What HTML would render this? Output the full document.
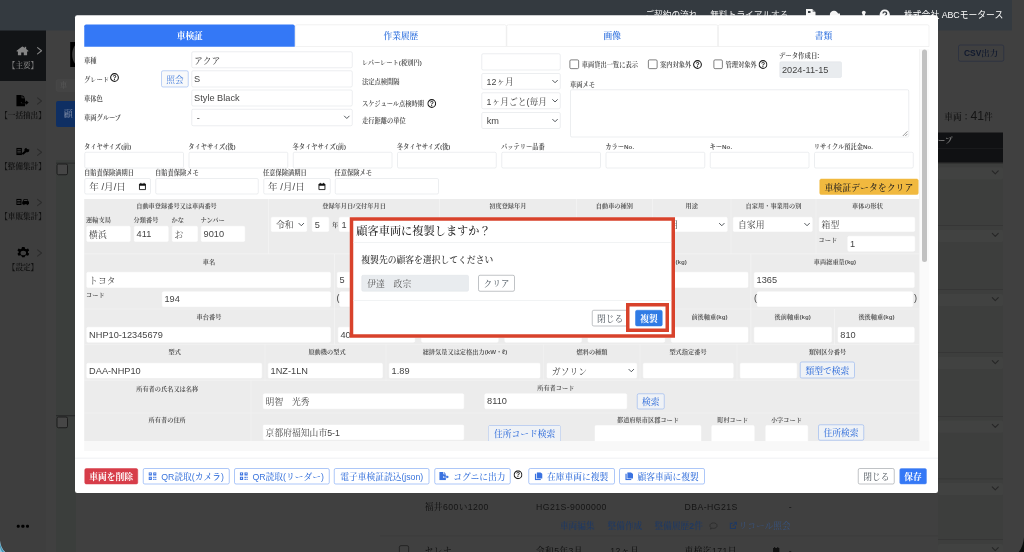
<!DOCTYPE html>
<html lang="ja"><head><meta charset="utf-8"><title>車両管理</title>
<style>
html,body{margin:0;padding:0;background:#404040;}
body{width:1024px;height:552px;overflow:hidden;font-family:"Liberation Sans","Noto Serif CJK JP","Noto Serif CJK SC",serif;}
#wrap{position:absolute;left:0;top:0;width:4096px;height:2208px;transform:scale(.25);transform-origin:0 0;filter:contrast(1);}
#root{position:relative;width:4096px;height:2208px;overflow:hidden;background:#404040;}
#root div,#root svg.abs{position:absolute;box-sizing:border-box;}
.lb{font-weight:bold;color:#5a5a5a;white-space:nowrap;}
.nv{font-family:"Liberation Sans","Noto Sans CJK JP",sans-serif;}
.in{background:#fff;border:2.2px solid #d9dce0;border-radius:6.4px;color:#444;font-size:36.8px;display:flex;align-items:center;padding-left:8.4px;white-space:nowrap;overflow:hidden;}
.in.g{border-color:#fff;}
.in.dis{background:#e9ecef;border-color:#dfe3e7;}
.sel .chev{position:absolute;right:5.2px;top:50%;width:30.4px;height:30.4px;margin-top:-15.2px;}
.bt{border-radius:7.2px;font-size:35px;font-weight:500;display:flex;align-items:center;justify-content:center;white-space:nowrap;border:2px solid #5a8ff0;color:#3a74dc;background:#fff;}
.bt span{display:flex;align-items:center;}
.bt span{position:relative;}
.cb{border:3.2px solid #555;border-radius:6.4px;background:#fff;}
.bgt{color:#141414;white-space:nowrap;letter-spacing:1.68px;font-weight:500;}
.lnk{color:#203961;white-space:nowrap;font-weight:600;}
.in.date{padding-left:6px;font-size:38.4px;}
.cal{position:absolute;right:14.8px;top:50%;width:33.6px;height:33.6px;margin-top:-16.4px;}
.ic{flex:none;}
</style></head><body><div id="wrap"><div id="root">

<div style="left:0px;top:120px;width:184px;height:2088px;background:#3e3e3e;"></div>
<div style="left:224px;top:640px;width:80px;height:1568px;background:#3b3e3c;"></div>
<div style="left:0px;top:120px;width:184px;height:204px;background:#121416;"></div>
<div class="lb" style="left:217.6px;top:184px;height:56px;line-height:56px;font-size:100px;color:#000;font-weight:bold;height:120px;line-height:120px;top:160.4px;">【</div>
<div style="left:224px;top:318px;width:96px;height:48px;border:2.4px solid #4d4d4d;border-radius:8px;background:#444;"></div>
<div class="lb" style="left:239.2px;top:314px;height:56px;line-height:56px;font-size:30px;color:#585858;font-weight:normal;">車</div>
<div style="left:224px;top:404px;width:136px;height:104px;background:#0f2f63;border-radius:8px;"></div>
<div class="lb" style="left:255.2px;top:428px;height:56px;line-height:56px;font-size:36px;color:#8691aa;font-weight:normal;">顧</div>
<div style="left:226.4px;top:654.4px;width:45.6px;height:46.8px;border:4.4px solid #1d1d1d;border-radius:8px;background:#464646;"></div>
<div style="left:226.4px;top:1666.4px;width:45.6px;height:46.4px;border:4.4px solid #1d1d1d;border-radius:8px;background:#464646;"></div>
<div style="left:224px;top:650.8px;width:80px;height:3.6px;background:#262626;"></div>
<div style="left:224px;top:1661.2px;width:80px;height:3.6px;background:#262626;"></div>
<svg class="abs" preserveAspectRatio="none" style="left:65.2px;top:184.8px;width:50px;height:36.8px" viewBox="1.2 1.500 13.600 11"><path d="M8 1.500L1.200 7.200l.9 1 .9-.8V12.500h3.600V9h2.800v3.500H13V7.400l.9.800.9-1L12 4.800V2.200h-1.600v1.300z" fill="#858585"/></svg>
<svg class="abs" style="left:143.2px;top:183.2px;width:32px;height:40px" viewBox="0 0 8 10"><path d="M1.8 1.900l4 3.100-4 3.100" fill="none" stroke="#858585" stroke-width="1.15" stroke-linecap="round" stroke-linejoin="round"/></svg>
<div class="lb" style="left:-28px;width:240px;text-align:center;top:230.8px;height:56px;line-height:56px;font-size:30.4px;color:#7d7d7d;font-weight:600;">【主要】</div>
<svg class="abs" preserveAspectRatio="none" style="left:65.2px;top:380.4px;width:50px;height:45.6px" viewBox="2.500 1 12.100 12"><path d="M2.500 1h5.200v3.300H11V8.300H7v1.400h4V13H2.500z M8.400 1l2.600 2.600H8.400z" fill="#000"/><path d="M11.700 6.600l3 2.400-3 2.400V9.900H7.600V8.100h4.100z" fill="#000"/></svg>
<svg class="abs" style="left:143.2px;top:384.4px;width:32px;height:40px" viewBox="0 0 8 10"><path d="M1.8 1.900l4 3.100-4 3.100" fill="none" stroke="#2c2c2c" stroke-width="1.15" stroke-linecap="round" stroke-linejoin="round"/></svg>
<div class="lb" style="left:-28px;width:240px;text-align:center;top:433.6px;height:56px;line-height:56px;font-size:30.4px;color:#101010;font-weight:600;">【一括抽出】</div>
<svg class="abs" preserveAspectRatio="none" style="left:65.2px;top:591.2px;width:52px;height:29.6px" viewBox="2 2.600 12 8.400"><path d="M2 2.600h5.200v8.400H2z M3 4.300h3.200v.9H3z M3 6.100h3.200v.9H3z M3 7.900h3.200v.9H3z" fill="#000" fill-rule="evenodd"/><path d="M8.300 9.300L11.900 5.200" stroke="#000" stroke-width="2.100" stroke-linecap="round" fill="none"/><path d="M14 3.600a2.500 2.500 0 1 1-2.200-1l-.3 1.700 1.300.6z" fill="#000"/></svg>
<svg class="abs" style="left:143.2px;top:589.2px;width:32px;height:40px" viewBox="0 0 8 10"><path d="M1.8 1.900l4 3.100-4 3.100" fill="none" stroke="#2c2c2c" stroke-width="1.15" stroke-linecap="round" stroke-linejoin="round"/></svg>
<div class="lb" style="left:-28px;width:240px;text-align:center;top:636px;height:56px;line-height:56px;font-size:30.4px;color:#101010;font-weight:600;">【整備集計】</div>
<svg class="abs" preserveAspectRatio="none" style="left:65.2px;top:795.2px;width:52px;height:25.6px" viewBox="1.500 3.500 13.700 7.200"><path d="M1.500 3.500h5.500v7H1.500z M2.500 5h3.500v.9H2.500z M2.500 6.800h3.500v.9H2.500z M2.500 8.500h3.500v.9H2.500z" fill="#000" fill-rule="evenodd"/><path d="M8.600 6.200l.8-2.400h4l.8 2.400c.5.100.8.500.8 1v2.600h-1.200v.9h-1.100v-.9h-2.600v.9H9v-.9H7.800V7.200c0-.5.300-.9.800-1z M9.500 6h4l-.5-1.400h-3z" fill="#000" fill-rule="evenodd"/></svg>
<svg class="abs" style="left:143.2px;top:789.6px;width:32px;height:40px" viewBox="0 0 8 10"><path d="M1.8 1.900l4 3.100-4 3.100" fill="none" stroke="#2c2c2c" stroke-width="1.15" stroke-linecap="round" stroke-linejoin="round"/></svg>
<div class="lb" style="left:-28px;width:240px;text-align:center;top:838.4px;height:56px;line-height:56px;font-size:30.4px;color:#101010;font-weight:600;">【車販集計】</div>
<svg class="abs" preserveAspectRatio="none" style="left:68.8px;top:988px;width:48.4px;height:48px" viewBox="2.100 1 11.800 14"><path d="M8 5.300a2.700 2.700 0 1 0 0 5.400 2.700 2.700 0 0 0 0-5.400z M6.700 1h2.600l.4 1.900 1.100.6 1.800-.7 1.300 2.200-1.400 1.300v1.400l1.400 1.300-1.300 2.200-1.800-.7-1.100.6-.4 1.900H6.700l-.4-1.900-1.100-.6-1.800.7-1.300-2.200 1.400-1.300V6.300L2.100 5l1.300-2.200 1.800.7 1.100-.6z" fill="#000" fill-rule="evenodd"/></svg>
<svg class="abs" style="left:143.2px;top:992px;width:32px;height:40px" viewBox="0 0 8 10"><path d="M1.8 1.900l4 3.100-4 3.100" fill="none" stroke="#2c2c2c" stroke-width="1.15" stroke-linecap="round" stroke-linejoin="round"/></svg>
<div class="lb" style="left:-28px;width:240px;text-align:center;top:1042.4px;height:56px;line-height:56px;font-size:30.4px;color:#101010;font-weight:600;">【設定】</div>
<div style="left:66.8px;top:2098.8px;width:12.4px;height:12.4px;background:#000;border-radius:4.8px;"></div>
<div style="left:85.2px;top:2098.8px;width:12.4px;height:12.4px;background:#000;border-radius:4.8px;"></div>
<div style="left:103.6px;top:2098.8px;width:12.4px;height:12.4px;background:#000;border-radius:4.8px;"></div>
<div style="left:3833.2px;top:178.8px;width:182.8px;height:66.8px;border:2.8px solid #1c2740;border-radius:8px;"></div>
<div class="lb" style="left:3824px;width:200px;text-align:center;top:184px;height:56px;line-height:56px;font-size:33.6px;color:#10192e;font-weight:600;">CSV出力</div>
<div class="lb" style="left:3777.2px;top:436px;height:56px;line-height:56px;font-size:34.8px;color:#141414;font-weight:600;height:72px;line-height:72px;top:426px;">車両：<span style="font-size:48.8px;font-weight:normal;">41</span>件</div>
<div style="left:3752px;top:529.6px;width:260px;height:124.8px;background:#101113;"></div>
<div style="left:3752px;top:592px;width:260px;height:2.4px;background:#232527;"></div>
<div class="lb" style="left:3751.2px;top:534px;height:56px;line-height:56px;font-size:30.4px;color:#707070;">ープ</div>
<div style="left:3752px;top:654.4px;width:260px;height:1553.6px;background:#3d3e3d;"></div>
<div style="left:3752px;top:650.4px;width:260px;height:2.8px;background:#343434;"></div>
<div style="left:3752px;top:668.8px;width:260px;height:48.8px;background:#414241;border-radius:6px;"></div>
<svg class="abs" style="left:3965.2px;top:679.2px;width:32px;height:24px" viewBox="0 0 8 6"><path d="M1 1.2l3 3 3-3" fill="none" stroke="#272727" stroke-width="1.1" stroke-linecap="round" stroke-linejoin="round"/></svg>
<div style="left:3752px;top:900.4px;width:260px;height:2.8px;background:#343434;"></div>
<div style="left:3752px;top:918.8px;width:260px;height:48.8px;background:#414241;border-radius:6px;"></div>
<svg class="abs" style="left:3965.2px;top:929.2px;width:32px;height:24px" viewBox="0 0 8 6"><path d="M1 1.2l3 3 3-3" fill="none" stroke="#272727" stroke-width="1.1" stroke-linecap="round" stroke-linejoin="round"/></svg>
<div style="left:3752px;top:1157.2px;width:260px;height:2.8px;background:#343434;"></div>
<div style="left:3752px;top:1175.6px;width:260px;height:48.8px;background:#414241;border-radius:6px;"></div>
<svg class="abs" style="left:3965.2px;top:1186px;width:32px;height:24px" viewBox="0 0 8 6"><path d="M1 1.2l3 3 3-3" fill="none" stroke="#272727" stroke-width="1.1" stroke-linecap="round" stroke-linejoin="round"/></svg>
<div style="left:3752px;top:1408.8px;width:260px;height:2.8px;background:#343434;"></div>
<div style="left:3752px;top:1427.2px;width:260px;height:48.8px;background:#414241;border-radius:6px;"></div>
<svg class="abs" style="left:3965.2px;top:1437.6px;width:32px;height:24px" viewBox="0 0 8 6"><path d="M1 1.2l3 3 3-3" fill="none" stroke="#272727" stroke-width="1.1" stroke-linecap="round" stroke-linejoin="round"/></svg>
<div style="left:3752px;top:1664px;width:260px;height:2.8px;background:#343434;"></div>
<div style="left:3752px;top:1682.4px;width:260px;height:48.8px;background:#414241;border-radius:6px;"></div>
<svg class="abs" style="left:3965.2px;top:1692.8px;width:32px;height:24px" viewBox="0 0 8 6"><path d="M1 1.2l3 3 3-3" fill="none" stroke="#272727" stroke-width="1.1" stroke-linecap="round" stroke-linejoin="round"/></svg>
<div style="left:3752px;top:1914px;width:260px;height:2.8px;background:#343434;"></div>
<div style="left:3752px;top:1932.4px;width:260px;height:48.8px;background:#414241;border-radius:6px;"></div>
<svg class="abs" style="left:3965.2px;top:1942.8px;width:32px;height:24px" viewBox="0 0 8 6"><path d="M1 1.2l3 3 3-3" fill="none" stroke="#272727" stroke-width="1.1" stroke-linecap="round" stroke-linejoin="round"/></svg>
<div style="left:3752px;top:2157.2px;width:260px;height:2.8px;background:#343434;"></div>
<div style="left:3752px;top:2175.6px;width:260px;height:48.8px;background:#414241;border-radius:6px;"></div>
<svg class="abs" style="left:3965.2px;top:2186px;width:32px;height:24px" viewBox="0 0 8 6"><path d="M1 1.2l3 3 3-3" fill="none" stroke="#272727" stroke-width="1.1" stroke-linecap="round" stroke-linejoin="round"/></svg>
<div class="bgt" style="left:1698.8px;top:1998.4px;height:56px;line-height:56px;font-size:34.8px;">福井600い1200</div>
<div class="bgt" style="left:2144px;top:1998.4px;height:56px;line-height:56px;font-size:34.8px;">HG21S-9000000</div>
<div class="bgt" style="left:2738.4px;top:1998.4px;height:56px;line-height:56px;font-size:34.8px;">DBA-HG21S</div>
<div class="bgt" style="left:3155.2px;top:1998.4px;height:56px;line-height:56px;font-size:34.8px;">-</div>
<div class="lnk" style="left:2239.6px;top:2074.8px;height:56px;line-height:56px;font-size:34.8px;">車両編集</div>
<div class="lnk" style="left:2430px;top:2074.8px;height:56px;line-height:56px;font-size:34.8px;">整備作成</div>
<div class="lnk" style="left:2618px;top:2074.8px;height:56px;line-height:56px;font-size:34.8px;">整備履歴2件</div>
<svg class="abs" style="left:2836px;top:2086px;width:36px;height:36px" viewBox="0 0 16 16"><path d="M8 2.5c3.600 0 6.300 2.100 6.300 4.900S11.600 12.300 8 12.300c-.8 0-1.600-.1-2.300-.3L2.500 13.500l1-2.600C2.400 10 1.700 8.800 1.700 7.400 1.700 4.600 4.400 2.500 8 2.500z" fill="none" stroke="#2a2a2a" stroke-width="1.3"/></svg>
<svg class="abs" style="left:2916px;top:2084.8px;width:34px;height:34px" viewBox="0 0 16 16"><path d="M12 9v4.500H2.500V4H7" fill="none" stroke="#203961" stroke-width="2"/><path d="M9 2h5v5M14 2L7 9" fill="none" stroke="#203961" stroke-width="2"/></svg>
<div class="lnk" style="left:2955.2px;top:2074.8px;height:56px;line-height:56px;font-size:34.8px;font-weight:normal;color:#38537f;">リコール照会</div>
<div style="left:1520px;top:2142.4px;width:2232px;height:2.4px;background:#3b3b3b;"></div>
<div style="left:1596px;top:2180.8px;width:40px;height:47.2px;border:3.6px solid #1c1c1c;border-radius:8px;"></div>
<div class="bgt" style="left:1698.8px;top:2174.4px;height:56px;line-height:56px;font-size:34.8px;">セレナ</div>
<div class="bgt" style="left:2144px;top:2174.4px;height:56px;line-height:56px;font-size:34.8px;">令和5年3月</div>
<div class="bgt" style="left:2441.2px;top:2174.4px;height:56px;line-height:56px;font-size:34.8px;">12ヶ月</div>
<div class="bgt" style="left:2738.4px;top:2174.4px;height:56px;line-height:56px;font-size:34.8px;">車検迄171日</div>
<svg class="abs" style="left:3090px;top:2185.6px;width:29.6px;height:33.6px" viewBox="0 0 14 16"><path d="M1 3h12v12H1z M1 6.500h12" fill="#111" /><path d="M4 1v3M10 1v3" stroke="#111" stroke-width="2"/></svg>
<div class="bgt" style="left:3155.2px;top:2174.4px;height:56px;line-height:56px;font-size:34.8px;">-</div>
<div style="left:0px;top:0px;width:4048px;height:121.6px;background:#343a40;"></div>
<div class="lb nv" style="left:2581.2px;top:30.4px;height:56px;line-height:56px;font-size:34.8px;color:#f2f2f2;font-weight:normal;">ご契約の流れ</div>
<div class="lb nv" style="left:2841.2px;top:30.4px;height:56px;line-height:56px;font-size:34.8px;color:#f2f2f2;font-weight:normal;">無料トライアルする</div>
<svg class="abs" style="left:3220px;top:32px;width:48px;height:48px" viewBox="805 8 12 12"><path d="M806 8.900h6.300l3.200 3.200V20H806z" fill="#f4f4f4"/><path d="M808 11h2.500v2H808z" fill="#343a40"/><path d="M812.600 8.900v3h3z" fill="#343a40" opacity=".55"/></svg>
<svg class="abs" style="left:3316px;top:40px;width:48px;height:40px" viewBox="829 10 12 10"><circle cx="834" cy="15" r="4.200" fill="#f4f4f4"/><path d="M834 13.500h6v3h-6z" fill="#f4f4f4"/></svg>
<svg class="abs" style="left:3444px;top:40px;width:24px;height:40px" viewBox="861 10 6 10"><circle cx="863.800" cy="12.600" r="1.900" fill="#f4f4f4"/><path d="M862.600 13h2.400v7h-2.400z" fill="#f4f4f4"/></svg>
<svg class="abs" style="left:3516px;top:36px;width:48px;height:48px" viewBox="879 9 12 12"><circle cx="884.750" cy="14.600" r="5.100" fill="#f4f4f4"/><path d="M883 13.600a1.800 1.800 0 0 1 3.600 0c0 1.200-1.800 1.400-1.800 2.800" fill="none" stroke="#343a40" stroke-width="1.300"/></svg>
<div class="lb nv" style="left:3616px;top:30.4px;height:56px;line-height:56px;font-size:35.2px;color:#fff;font-weight:normal;">株式会社 ABCモータース</div>
<div style="left:300px;top:61.2px;width:3452px;height:1910.8px;background:#fff;border-radius:8.8px;"></div>
<div style="left:337.2px;top:98.4px;width:842px;height:88.4px;background:#3478f6;border-radius:7.2px 7.2px 0 0;"></div>
<div class="lb" style="left:359px;width:800px;text-align:center;top:114.4px;height:56px;line-height:56px;font-size:34.8px;color:#fff;">車検証</div>
<div style="left:1180.8px;top:98.4px;width:845.6px;height:88.4px;border:2.4px solid #e4e4e4;border-radius:7.2px 7.2px 0 0;"></div>
<div class="lb" style="left:1203.6px;width:800px;text-align:center;top:114.4px;height:56px;line-height:56px;font-size:34.8px;color:#3a78e0;font-weight:600;">作業履歴</div>
<div style="left:2026.4px;top:98.4px;width:845.2px;height:88.4px;border:2.4px solid #e4e4e4;border-radius:7.2px 7.2px 0 0;"></div>
<div class="lb" style="left:2049px;width:800px;text-align:center;top:114.4px;height:56px;line-height:56px;font-size:34.8px;color:#3a78e0;font-weight:600;">画像</div>
<div style="left:2871.6px;top:98.4px;width:845.2px;height:88.4px;border:2.4px solid #e4e4e4;border-radius:7.2px 7.2px 0 0;"></div>
<div class="lb" style="left:2894.2px;width:800px;text-align:center;top:114.4px;height:56px;line-height:56px;font-size:34.8px;color:#3a78e0;font-weight:600;">書類</div>
<div style="left:3677.2px;top:196.8px;width:39.6px;height:1607.2px;background:#fafafa;border-left:2px solid #ececec;"></div>
<div style="left:3688px;top:197.6px;width:20px;height:850.4px;background:#c1c1c1;border-radius:10px;"></div>
<div class="lb" style="left:336.4px;top:213.6px;height:56px;line-height:56px;font-size:25px;">車種</div>
<div class="lb" style="left:336.4px;top:288.8px;height:56px;line-height:56px;font-size:25px;">グレード</div>
<svg class="abs" style="left:439.6px;top:292.4px;width:36px;height:36px" viewBox="0 0 16 16"><circle cx="8" cy="8" r="6.9" fill="none" stroke="#1a1a1a" stroke-width="1.9"/><text x="8" y="12.3" text-anchor="middle" font-family="Liberation Sans, sans-serif" font-weight="bold" font-size="12" fill="#1a1a1a">?</text></svg>
<div class="lb" style="left:336.4px;top:365.6px;height:56px;line-height:56px;font-size:25px;">車体色</div>
<div class="lb" style="left:336.4px;top:443.2px;height:56px;line-height:56px;font-size:25px;">車両グループ</div>
<div class="bt" style="left:645.2px;top:282.4px;width:109.2px;height:66.4px;font-size:35px;background:#f8f9fa;border:2px solid #7fa6ee;color:#4a80dd;font-weight:normal;"><span>照会</span></div>
<div class="in" style="left:766px;top:206px;width:643.6px;height:66.4px;font-size:35.2px;"><span>アクア</span></div>
<div class="in" style="left:766px;top:282.4px;width:643.6px;height:66.4px;"><span>S</span></div>
<div class="in" style="left:766px;top:358.8px;width:643.6px;height:66.4px;"><span>Style Black</span></div>
<div class="in sel" style="left:766px;top:435.6px;width:643.6px;height:68px;"><span>&nbsp;-</span><svg class="chev" viewBox="0 0 16 16"><path d="M3 5.5l5 5 5-5" fill="none" stroke="#343a40" stroke-width="1.8" stroke-linecap="round" stroke-linejoin="round"/></svg></div>
<div class="lb" style="left:1447.6px;top:221.6px;height:56px;line-height:56px;font-size:25px;">レバーレート(税別円)</div>
<div class="lb" style="left:1447.6px;top:298.4px;height:56px;line-height:56px;font-size:25px;">法定点検間隔</div>
<div class="lb" style="left:1447.6px;top:385.6px;height:56px;line-height:56px;font-size:25px;">スケジュール点検時期</div>
<svg class="abs" style="left:1708.8px;top:395.6px;width:36px;height:36px" viewBox="0 0 16 16"><circle cx="8" cy="8" r="6.9" fill="none" stroke="#1a1a1a" stroke-width="1.9"/><text x="8" y="12.3" text-anchor="middle" font-family="Liberation Sans, sans-serif" font-weight="bold" font-size="12" fill="#1a1a1a">?</text></svg>
<div class="lb" style="left:1447.6px;top:455.2px;height:56px;line-height:56px;font-size:25px;">走行距離の単位</div>
<div class="in" style="left:1926px;top:214.4px;width:316.4px;height:66.4px;"><span></span></div>
<div class="in sel" style="left:1926px;top:293.2px;width:316.4px;height:65.2px;font-size:35.2px;"><span>&nbsp;12ヶ月</span><svg class="chev" viewBox="0 0 16 16"><path d="M3 5.5l5 5 5-5" fill="none" stroke="#343a40" stroke-width="1.8" stroke-linecap="round" stroke-linejoin="round"/></svg></div>
<div class="in sel" style="left:1926px;top:370px;width:316.4px;height:66px;font-size:35.2px;"><span>&nbsp;1ヶ月ごと(毎月</span><svg class="chev" viewBox="0 0 16 16"><path d="M3 5.5l5 5 5-5" fill="none" stroke="#343a40" stroke-width="1.8" stroke-linecap="round" stroke-linejoin="round"/></svg></div>
<div class="in sel" style="left:1926px;top:448.8px;width:316.4px;height:66.4px;"><span>&nbsp;km</span><svg class="chev" viewBox="0 0 16 16"><path d="M3 5.5l5 5 5-5" fill="none" stroke="#343a40" stroke-width="1.8" stroke-linecap="round" stroke-linejoin="round"/></svg></div>
<div class="cb" style="left:2278.4px;top:238.4px;width:37.6px;height:37.6px;"></div>
<div class="lb" style="left:2327.2px;top:229.6px;height:56px;line-height:56px;font-size:25px;">車両貸出一覧に表示</div>
<div class="cb" style="left:2592px;top:238.4px;width:37.6px;height:37.6px;"></div>
<div class="lb" style="left:2640.4px;top:229.6px;height:56px;line-height:56px;font-size:25px;">案内対象外</div>
<svg class="abs" style="left:2772.4px;top:240.4px;width:36px;height:36px" viewBox="0 0 16 16"><circle cx="8" cy="8" r="6.9" fill="none" stroke="#1a1a1a" stroke-width="1.9"/><text x="8" y="12.3" text-anchor="middle" font-family="Liberation Sans, sans-serif" font-weight="bold" font-size="12" fill="#1a1a1a">?</text></svg>
<div class="cb" style="left:2853.6px;top:238.4px;width:37.6px;height:37.6px;"></div>
<div class="lb" style="left:2902px;top:229.6px;height:56px;line-height:56px;font-size:25px;">管理対象外</div>
<svg class="abs" style="left:3034px;top:240.4px;width:36px;height:36px" viewBox="0 0 16 16"><circle cx="8" cy="8" r="6.9" fill="none" stroke="#1a1a1a" stroke-width="1.9"/><text x="8" y="12.3" text-anchor="middle" font-family="Liberation Sans, sans-serif" font-weight="bold" font-size="12" fill="#1a1a1a">?</text></svg>
<div class="lb" style="left:3115.6px;top:195.2px;height:56px;line-height:56px;font-size:25.6px;">データ作成日:</div>
<div class="in dis" style="left:3117.6px;top:246.4px;width:249.6px;height:64.8px;"><span>2024-11-15</span></div>
<div class="lb" style="left:2279.6px;top:310.4px;height:56px;line-height:56px;font-size:25px;">車両メモ</div>
<div style="left:2281.2px;top:357.6px;width:1354.4px;height:191.2px;border:2.2px solid #d9dce0;border-radius:6.4px;background:#fff;"></div>
<svg class="abs" style="left:3608px;top:522px;width:24px;height:24px" viewBox="0 0 6 6"><path d="M5.500.8L.8 5.500M5.500 3.300L3.300 5.500" stroke="#555" stroke-width=".6" fill="none"/></svg>
<div class="lb" style="left:336.4px;top:557.6px;height:56px;line-height:56px;font-size:25px;">タイヤサイズ(前)</div>
<div class="in" style="left:338px;top:608.4px;width:396.8px;height:64.4px;"><span></span></div>
<div class="lb" style="left:753.4px;top:557.6px;height:56px;line-height:56px;font-size:25px;">タイヤサイズ(後)</div>
<div class="in" style="left:755px;top:608.4px;width:396.8px;height:64.4px;"><span></span></div>
<div class="lb" style="left:1170.4px;top:557.6px;height:56px;line-height:56px;font-size:25px;">冬タイヤサイズ(前)</div>
<div class="in" style="left:1172px;top:608.4px;width:396.8px;height:64.4px;"><span></span></div>
<div class="lb" style="left:1587.4px;top:557.6px;height:56px;line-height:56px;font-size:25px;">冬タイヤサイズ(後)</div>
<div class="in" style="left:1589px;top:608.4px;width:396.8px;height:64.4px;"><span></span></div>
<div class="lb" style="left:2004.4px;top:557.6px;height:56px;line-height:56px;font-size:25px;">バッテリー品番</div>
<div class="in" style="left:2006px;top:608.4px;width:396.8px;height:64.4px;"><span></span></div>
<div class="lb" style="left:2421.4px;top:557.6px;height:56px;line-height:56px;font-size:25px;">カラーNo.</div>
<div class="in" style="left:2423px;top:608.4px;width:396.8px;height:64.4px;"><span></span></div>
<div class="lb" style="left:2838.4px;top:557.6px;height:56px;line-height:56px;font-size:25px;">キーNo.</div>
<div class="in" style="left:2840px;top:608.4px;width:396.8px;height:64.4px;"><span></span></div>
<div class="lb" style="left:3255.4px;top:557.6px;height:56px;line-height:56px;font-size:25px;">リサイクル預託金No.</div>
<div class="in" style="left:3257px;top:608.4px;width:396.8px;height:64.4px;"><span></span></div>
<div class="lb" style="left:336.4px;top:663.6px;height:56px;line-height:56px;font-size:25px;">自賠責保険満期日</div>
<div class="in date" style="left:338px;top:712.8px;width:265.2px;height:64.4px;"><span>&nbsp;年 /月/日</span><svg class="cal" viewBox="0 0 14 14"><path d="M2 3h10v9.300H2z" fill="none" stroke="#111" stroke-width="1.500"/><path d="M2 3h10v3H2z" fill="#111"/><path d="M4.300 1v2M9.700 1v2" stroke="#111" stroke-width="1.500"/></svg></div>
<div class="lb" style="left:620.4px;top:663.6px;height:56px;line-height:56px;font-size:25px;">自賠責保険メモ</div>
<div class="in" style="left:622px;top:712.8px;width:411.6px;height:64.4px;"><span></span></div>
<div class="lb" style="left:1051.6px;top:663.6px;height:56px;line-height:56px;font-size:25px;">任意保険満期日</div>
<div class="in date" style="left:1053.6px;top:712.8px;width:268px;height:64.4px;"><span>&nbsp;年 /月/日</span><svg class="cal" viewBox="0 0 14 14"><path d="M2 3h10v9.300H2z" fill="none" stroke="#111" stroke-width="1.500"/><path d="M2 3h10v3H2z" fill="#111"/><path d="M4.300 1v2M9.700 1v2" stroke="#111" stroke-width="1.500"/></svg></div>
<div class="lb" style="left:1338.4px;top:663.6px;height:56px;line-height:56px;font-size:25px;">任意保険メモ</div>
<div class="in" style="left:1340px;top:712.8px;width:414.8px;height:64.4px;"><span></span></div>
<div class="bt" style="left:3277.6px;top:714.8px;width:396px;height:64px;background:#f1b93f;border-color:#f1b93f;color:#2b2620;font-size:35.6px;font-weight:500;"><span>車検証データをクリア</span></div>
<div style="left:337.2px;top:796px;width:3338.8px;height:968.8px;background:#ececec;"></div>
<div style="left:337.2px;top:1764.8px;width:3379.6px;height:39.2px;background:#f8f8f8;"></div>
<div style="left:337.2px;top:1014.2px;width:3338.8px;height:2.8px;background:#f4f4f4;"></div>
<div style="left:337.2px;top:1234.6px;width:3338.8px;height:2.8px;background:#f4f4f4;"></div>
<div style="left:337.2px;top:1376.6px;width:3338.8px;height:2.8px;background:#f4f4f4;"></div>
<div style="left:337.2px;top:1519.4px;width:3338.8px;height:2.8px;background:#f4f4f4;"></div>
<div style="left:337.2px;top:1650.6px;width:3338.8px;height:2.8px;background:#f4f4f4;"></div>
<div class="lb" style="left:306px;width:800px;text-align:center;top:796.8px;height:56px;line-height:56px;font-size:24.8px;">自動車登録番号又は車両番号</div>
<div class="lb" style="left:1016.2px;width:800px;text-align:center;top:796.8px;height:56px;line-height:56px;font-size:24.8px;">登録年月日/交付年月日</div>
<div class="lb" style="left:1631.4px;width:800px;text-align:center;top:796.8px;height:56px;line-height:56px;font-size:24.8px;">初度登録年月</div>
<div class="lb" style="left:2057.4px;width:800px;text-align:center;top:796.8px;height:56px;line-height:56px;font-size:24.8px;">自動車の種別</div>
<div class="lb" style="left:2366.8px;width:800px;text-align:center;top:796.8px;height:56px;line-height:56px;font-size:24.8px;">用途</div>
<div class="lb" style="left:2694px;width:800px;text-align:center;top:796.8px;height:56px;line-height:56px;font-size:24.8px;">自家用・事業用の別</div>
<div class="lb" style="left:3070px;width:800px;text-align:center;top:796.8px;height:56px;line-height:56px;font-size:24.8px;">車体の形状</div>
<div style="left:1073.4px;top:796px;width:2.8px;height:219.6px;background:#f4f4f4;"></div>
<div style="left:1756.2px;top:796px;width:2.8px;height:219.6px;background:#f4f4f4;"></div>
<div style="left:2303.8px;top:796px;width:2.8px;height:219.6px;background:#f4f4f4;"></div>
<div style="left:2608.2px;top:796px;width:2.8px;height:219.6px;background:#f4f4f4;"></div>
<div style="left:2922.6px;top:796px;width:2.8px;height:219.6px;background:#f4f4f4;"></div>
<div style="left:3262.6px;top:796px;width:2.8px;height:219.6px;background:#f4f4f4;"></div>
<div class="lb" style="left:344.4px;top:852.8px;height:56px;line-height:56px;font-size:24.8px;">運輸支局</div>
<div class="lb" style="left:534.4px;top:852.8px;height:56px;line-height:56px;font-size:24.8px;">分類番号</div>
<div class="lb" style="left:686.4px;top:852.8px;height:56px;line-height:56px;font-size:24.8px;">かな</div>
<div class="lb" style="left:802.4px;top:852.8px;height:56px;line-height:56px;font-size:24.8px;">ナンバー</div>
<div class="in g" style="left:346px;top:904px;width:175.6px;height:63.2px;font-size:35.2px;"><span>横浜</span></div>
<div class="in g" style="left:536px;top:904px;width:138px;height:63.2px;"><span>411</span></div>
<div class="in g" style="left:688px;top:904px;width:102.8px;height:63.2px;font-size:35.2px;"><span>お</span></div>
<div class="in g" style="left:804px;top:904px;width:176px;height:63.2px;"><span>9010</span></div>
<div class="in g sel" style="left:1084px;top:868.4px;width:143.6px;height:58.8px;font-size:35.2px;"><span>&nbsp;令和</span><svg class="chev" viewBox="0 0 16 16"><path d="M3 5.5l5 5 5-5" fill="none" stroke="#343a40" stroke-width="1.8" stroke-linecap="round" stroke-linejoin="round"/></svg></div>
<div class="in g" style="left:1248.4px;top:868.4px;width:67.6px;height:58.8px;"><span>5</span></div>
<div class="lb" style="left:1327.6px;top:870.4px;height:56px;line-height:56px;font-size:24.8px;">年</div>
<div class="in g" style="left:1356px;top:868.4px;width:68px;height:58.8px;"><span>1</span></div>
<div class="in g sel" style="left:2620px;top:868.4px;width:289.6px;height:58.8px;font-size:35.2px;padding-left:10px;"><span>&nbsp;乗用</span><svg class="chev" viewBox="0 0 16 16"><path d="M3 5.5l5 5 5-5" fill="none" stroke="#343a40" stroke-width="1.8" stroke-linecap="round" stroke-linejoin="round"/></svg></div>
<div class="in g sel" style="left:2932px;top:868.4px;width:318.4px;height:58.8px;font-size:35.2px;"><span>&nbsp;自家用</span><svg class="chev" viewBox="0 0 16 16"><path d="M3 5.5l5 5 5-5" fill="none" stroke="#343a40" stroke-width="1.8" stroke-linecap="round" stroke-linejoin="round"/></svg></div>
<div class="in g" style="left:3276px;top:868.4px;width:384px;height:58.8px;font-size:35.2px;"><span>箱型</span></div>
<div class="lb" style="left:3274.4px;top:930.4px;height:56px;line-height:56px;font-size:24.8px;">コード</div>
<div class="in g" style="left:3389.6px;top:944px;width:270.4px;height:61.6px;"><span>1</span></div>
<div class="lb" style="left:436px;width:800px;text-align:center;top:1017.6px;height:56px;line-height:56px;font-size:24.8px;">車名</div>
<div class="lb" style="left:2940px;width:800px;text-align:center;top:1019.6px;height:56px;line-height:56px;font-size:24.8px;">車両総重量(kg)</div>
<div class="lb" style="left:2702px;top:1019.6px;height:56px;line-height:56px;font-size:24.8px;">(kg)</div>
<div style="left:1335.8px;top:1015.6px;width:2.8px;height:362.4px;background:#f4f4f4;"></div>
<div style="left:3002.2px;top:1015.6px;width:2.8px;height:362.4px;background:#f4f4f4;"></div>
<div class="in g" style="left:346px;top:1088.4px;width:977.2px;height:62.4px;font-size:35.2px;"><span>トヨタ</span></div>
<div class="lb" style="left:344.4px;top:1149.6px;height:56px;line-height:56px;font-size:24.8px;">コード</div>
<div class="in g" style="left:647.6px;top:1165.6px;width:675.6px;height:62.4px;"><span>194</span></div>
<div class="in g" style="left:1347.6px;top:1088px;width:1052.4px;height:62.8px;"><span>5</span></div>
<div class="in g" style="left:2688px;top:1088.4px;width:305.2px;height:62.4px;"><span></span></div>
<div class="lb" style="left:1346.4px;top:1165.2px;height:56px;line-height:56px;font-size:36.8px;font-weight:normal;color:#444;">(</div>
<div class="in g" style="left:1358.4px;top:1165.6px;width:1041.6px;height:61.6px;"><span></span></div>
<div class="in g" style="left:3016px;top:1088.8px;width:642.4px;height:62px;"><span>1365</span></div>
<div class="lb" style="left:3016px;top:1165.2px;height:56px;line-height:56px;font-size:36.8px;font-weight:normal;color:#444;">(</div>
<div class="in g" style="left:3028px;top:1166px;width:624px;height:61.2px;"><span></span></div>
<div class="lb" style="left:3655.6px;top:1165.2px;height:56px;line-height:56px;font-size:36.8px;font-weight:normal;color:#444;">)</div>
<div class="lb" style="left:436px;width:800px;text-align:center;top:1238px;height:56px;line-height:56px;font-size:24.8px;">車台番号</div>
<div class="lb" style="left:2438px;width:800px;text-align:center;top:1238.4px;height:56px;line-height:56px;font-size:24.8px;">前後軸重(kg)</div>
<div class="lb" style="left:2770.8px;width:800px;text-align:center;top:1238.4px;height:56px;line-height:56px;font-size:24.8px;">後前軸重(kg)</div>
<div class="lb" style="left:3106px;width:800px;text-align:center;top:1238.4px;height:56px;line-height:56px;font-size:24.8px;">後後軸重(kg)</div>
<div style="left:3337px;top:1236px;width:2.8px;height:142px;background:#f4f4f4;"></div>
<div class="in g" style="left:346px;top:1308px;width:977.2px;height:62.4px;"><span>NHP10-12345679</span></div>
<div class="in g" style="left:1351.6px;top:1308px;width:308.8px;height:62.4px;"><span>40</span></div>
<div class="in g" style="left:1684.8px;top:1308px;width:308.8px;height:62.4px;"><span></span></div>
<div class="in g" style="left:2018px;top:1308px;width:308.8px;height:62.4px;"><span></span></div>
<div class="in g" style="left:2351.2px;top:1308px;width:308.8px;height:62.4px;"><span></span></div>
<div class="in g" style="left:2684.4px;top:1308px;width:308.8px;height:62.4px;"><span></span></div>
<div class="in g" style="left:3016px;top:1308px;width:311.2px;height:62.4px;"><span></span></div>
<div class="in g" style="left:3350.8px;top:1308px;width:307.6px;height:62.4px;"><span>810</span></div>
<div class="lb" style="left:299.2px;width:800px;text-align:center;top:1381.2px;height:56px;line-height:56px;font-size:24.8px;">型式</div>
<div class="lb" style="left:908px;width:800px;text-align:center;top:1381.2px;height:56px;line-height:56px;font-size:24.8px;">原動機の型式</div>
<div class="lb" style="left:1460px;width:800px;text-align:center;top:1381.2px;height:56px;line-height:56px;font-size:24.8px;">総排気量又は定格出力(kW・ℓ)</div>
<div class="lb" style="left:1968px;width:800px;text-align:center;top:1381.2px;height:56px;line-height:56px;font-size:24.8px;">燃料の種類</div>
<div class="lb" style="left:2352px;width:800px;text-align:center;top:1381.2px;height:56px;line-height:56px;font-size:24.8px;">型式指定番号</div>
<div class="lb" style="left:2910px;width:800px;text-align:center;top:1381.2px;height:56px;line-height:56px;font-size:24.8px;">類別区分番号</div>
<div style="left:1058.6px;top:1378px;width:2.8px;height:142.8px;background:#f4f4f4;"></div>
<div style="left:1542.6px;top:1378px;width:2.8px;height:142.8px;background:#f4f4f4;"></div>
<div style="left:2172.6px;top:1378px;width:2.8px;height:142.8px;background:#f4f4f4;"></div>
<div style="left:2558.6px;top:1378px;width:2.8px;height:142.8px;background:#f4f4f4;"></div>
<div style="left:2946.6px;top:1378px;width:2.8px;height:142.8px;background:#f4f4f4;"></div>
<div class="in g" style="left:346px;top:1452px;width:702px;height:61.2px;"><span>DAA-NHP10</span></div>
<div class="in g" style="left:1072px;top:1452px;width:459.2px;height:61.2px;"><span>1NZ-1LN</span></div>
<div class="in g" style="left:1556px;top:1452px;width:605.2px;height:61.2px;"><span>1.89</span></div>
<div class="in g sel" style="left:2187.2px;top:1452px;width:360.8px;height:61.2px;font-size:35.2px;"><span>&nbsp;ガソリン</span><svg class="chev" viewBox="0 0 16 16"><path d="M3 5.5l5 5 5-5" fill="none" stroke="#343a40" stroke-width="1.8" stroke-linecap="round" stroke-linejoin="round"/></svg></div>
<div class="in g" style="left:2572px;top:1452px;width:362.4px;height:61.2px;"><span></span></div>
<div class="in g" style="left:2960px;top:1452px;width:228px;height:61.2px;"><span></span></div>
<div class="bt" style="left:3200px;top:1447.2px;width:218.8px;height:66px;background:#eff2f6;border:2px solid #7fa6ee;font-size:35px;"><span>類型で検索</span></div>
<div class="lb" style="left:268.8px;width:800px;text-align:center;top:1525.6px;height:56px;line-height:56px;font-size:24.8px;">所有者の氏名又は名称</div>
<div class="lb" style="left:1823.2px;width:800px;text-align:center;top:1524.8px;height:56px;line-height:56px;font-size:24.8px;">所有者コード</div>
<div style="left:1002.6px;top:1520.8px;width:2.8px;height:244px;background:#f4f4f4;"></div>
<div class="in g" style="left:1052px;top:1574.4px;width:804px;height:61.2px;font-size:35.2px;"><span>明智　光秀</span></div>
<div class="in g" style="left:1938px;top:1574.4px;width:570px;height:61.2px;"><span>8110</span></div>
<div class="bt" style="left:2548px;top:1574px;width:110px;height:63.2px;background:#eff2f6;border:2px solid #7fa6ee;font-size:35px;"><span>検索</span></div>
<div class="lb" style="left:268.8px;width:800px;text-align:center;top:1651.2px;height:56px;line-height:56px;font-size:24.8px;">所有者の住所</div>
<div class="lb" style="left:2192px;width:800px;text-align:center;top:1651.2px;height:56px;line-height:56px;font-size:24.8px;">都道府県市区郡コード</div>
<div class="lb" style="left:2530.8px;width:800px;text-align:center;top:1651.2px;height:56px;line-height:56px;font-size:24.8px;">町村コード</div>
<div class="lb" style="left:2745.6px;width:800px;text-align:center;top:1651.2px;height:56px;line-height:56px;font-size:24.8px;">小字コード</div>
<div class="in g" style="left:1052px;top:1699.2px;width:804px;height:60.8px;font-size:35.2px;"><span>京都府福知山市5-1</span></div>
<div class="bt" style="left:1953.2px;top:1700.8px;width:290px;height:64px;background:#eff2f6;border:2px solid #7fa6ee;font-size:35px;border-bottom:none;border-radius:7.2px 7.2px 0 0;"><span>住所コード検索</span></div>
<div class="in g" style="left:2378.8px;top:1700.8px;width:426.4px;height:64px;border-radius:6.4px 6.4px 0 0;"><span></span></div>
<div class="in g" style="left:2845.6px;top:1700.8px;width:172.8px;height:64px;border-radius:6.4px 6.4px 0 0;"><span></span></div>
<div class="in g" style="left:3061.6px;top:1700.8px;width:170.4px;height:64px;border-radius:6.4px 6.4px 0 0;"><span></span></div>
<div class="bt" style="left:3272.8px;top:1697.6px;width:182.8px;height:64.4px;background:#eff2f6;border:2px solid #7fa6ee;font-size:35px;"><span>住所検索</span></div>
<div style="left:300px;top:1830.8px;width:3452px;height:2.8px;background:#e9ecef;"></div>
<div class="bt" style="left:338px;top:1872.8px;width:214px;height:64px;background:#d73d49;border-color:#d73d49;color:#fff;font-weight:bold;"><span>車両を削除</span></div>
<div class="bt" style="left:572px;top:1872.8px;width:345.6px;height:64px;"><span><svg class="ic" viewBox="1 1 12 12" preserveAspectRatio="none" style="width:32.4px;height:30.8px;margin-right:18.4px;"><path d="M1 1h5v5H1z M8 1h5v5H8z M1 8h5v5H1z M8 8h2v2H8z M11 8h2v2h-2z M8 11h2v2H8z M11 11h2v2h-2z" fill="#3a72e0"/><path d="M2.700 2.700h1.600v1.600H2.700z M9.700 2.700h1.600v1.600H9.700z M2.700 9.700h1.600v1.600H2.700z" fill="#fff"/></svg>QR読取(カメラ)</span></div>
<div class="bt" style="left:936.8px;top:1872.8px;width:381.2px;height:64px;"><span><svg class="ic" viewBox="1 1 12 12" preserveAspectRatio="none" style="width:32.4px;height:30.8px;margin-right:18.4px;"><path d="M1 1h5v5H1z M8 1h5v5H8z M1 8h5v5H1z M8 8h2v2H8z M11 8h2v2h-2z M8 11h2v2H8z M11 11h2v2h-2z" fill="#3a72e0"/><path d="M2.700 2.700h1.600v1.600H2.700z M9.700 2.700h1.600v1.600H9.700z M2.700 9.700h1.600v1.600H2.700z" fill="#fff"/></svg>QR読取(リーダー)</span></div>
<div class="bt" style="left:1336.4px;top:1872.8px;width:380.8px;height:64px;"><span>電子車検証読込(json)</span></div>
<div class="bt" style="left:1737.6px;top:1872.8px;width:304.4px;height:64px;"><span><svg class="ic" viewBox="1.5 0.5 13.2 13" preserveAspectRatio="none" style="width:39.2px;height:33.2px;margin-right:16.8px;"><path d="M1.500 0.500h5.500v3.600h3.400V7H6.500v2.400h3.900V13.500H1.500z M8 .5l2.400 2.600H8z" fill="#3a72e0"/><path d="M11.500 5.600l3.200 2.600-3.200 2.600V9.100H7.500V7.300h4z" fill="#3a72e0"/></svg>コグニに出力</span></div>
<svg class="abs" style="left:2054px;top:1881.2px;width:36px;height:36px" viewBox="0 0 16 16"><circle cx="8" cy="8" r="6.9" fill="none" stroke="#1a1a1a" stroke-width="1.9"/><text x="8" y="12.3" text-anchor="middle" font-family="Liberation Sans, sans-serif" font-weight="bold" font-size="12" fill="#1a1a1a">?</text></svg>
<div class="bt" style="left:2113.6px;top:1872.8px;width:345.2px;height:64px;"><span><svg class="ic" viewBox="1.5 0.5 11 13" preserveAspectRatio="none" style="width:31.2px;height:32px;margin-right:17.6px;"><path d="M4.500 0.500h5l3 3V10.500h-8z" fill="#3a72e0"/><path d="M1.500 3h2v8.500h6.500v2h-8.500z" fill="#3a72e0"/></svg>在庫車両に複製</span></div>
<div class="bt" style="left:2477.2px;top:1872.8px;width:342px;height:64px;"><span><svg class="ic" viewBox="1.5 0.5 11 13" preserveAspectRatio="none" style="width:31.2px;height:32px;margin-right:17.6px;"><path d="M4.500 0.500h5l3 3V10.500h-8z" fill="#3a72e0"/><path d="M1.500 3h2v8.500h6.500v2h-8.500z" fill="#3a72e0"/></svg>顧客車両に複製</span></div>
<div class="bt" style="left:3432px;top:1872.8px;width:146.4px;height:64px;border-color:#80868c;color:#5f666d;"><span>閉じる</span></div>
<div class="bt" style="left:3597.6px;top:1872.8px;width:109.6px;height:64px;background:#3478f6;color:#fff;font-weight:bold;"><span>保存</span></div>
<div style="left:1398.8px;top:869.2px;width:1300.8px;height:481.6px;background:#fff;border:14.4px solid #d8422b;"></div>
<div class="lb" style="left:1425.2px;top:894.4px;height:56px;line-height:56px;font-size:44.8px;color:#2a2a2a;font-weight:500;height:80px;line-height:80px;top:884.4px;">顧客車両に複製しますか？</div>
<div style="left:1413.2px;top:969.2px;width:1272px;height:2.8px;background:#edeff1;"></div>
<div class="lb" style="left:1445.2px;top:1011.2px;height:56px;line-height:56px;font-size:35.2px;color:#444;font-weight:600;">複製先の顧客を選択してください</div>
<div class="in dis" style="left:1445.6px;top:1100px;width:429.6px;height:66.4px;font-size:35.2px;font-size:35.2px;padding-left:21.2px;color:#5a5a5a;"><span>伊達　政宗</span></div>
<div class="bt" style="left:1913.2px;top:1100.4px;width:145.6px;height:66px;border-color:#80868c;color:#6c757d;font-size:34.8px;"><span>クリア</span></div>
<div style="left:1413.2px;top:1200px;width:1272px;height:2.8px;background:#edeff1;"></div>
<div class="bt" style="left:2368.4px;top:1240px;width:143.6px;height:65.2px;border-color:#80868c;color:#5f666d;font-size:35px;justify-content:flex-start;padding-left:17.6px;"><span>閉じる</span></div>
<div style="left:2504.4px;top:1211.6px;width:171.2px;height:116.4px;border:14px solid #d8422b;background:#fff;"></div>
<div class="bt" style="left:2540.8px;top:1240px;width:109.6px;height:64.8px;background:#2f7be5;border-color:#2f7be5;color:#fff;font-size:35px;font-weight:bold;"><span>複製</span></div>
<svg class="abs" style="left:0;top:2144px;width:48px;height:64px" viewBox="0 536 12 16"><path d="M0 540.500Q.8 548 5.200 552H0z" fill="#96c6e0"/><path d="M0 543.500Q1.200 549 4 552H2.200Q.5 549.500 0 547z" fill="#2a86a6" opacity=".75"/></svg>
<svg class="abs" style="left:4032px;top:2120px;width:64px;height:88px" viewBox="1008 530 16 22"><path d="M1024 537.200Q1023.300 546 1018.800 552H1024z" fill="#0b0e0d"/></svg>
</div></div></body></html>
